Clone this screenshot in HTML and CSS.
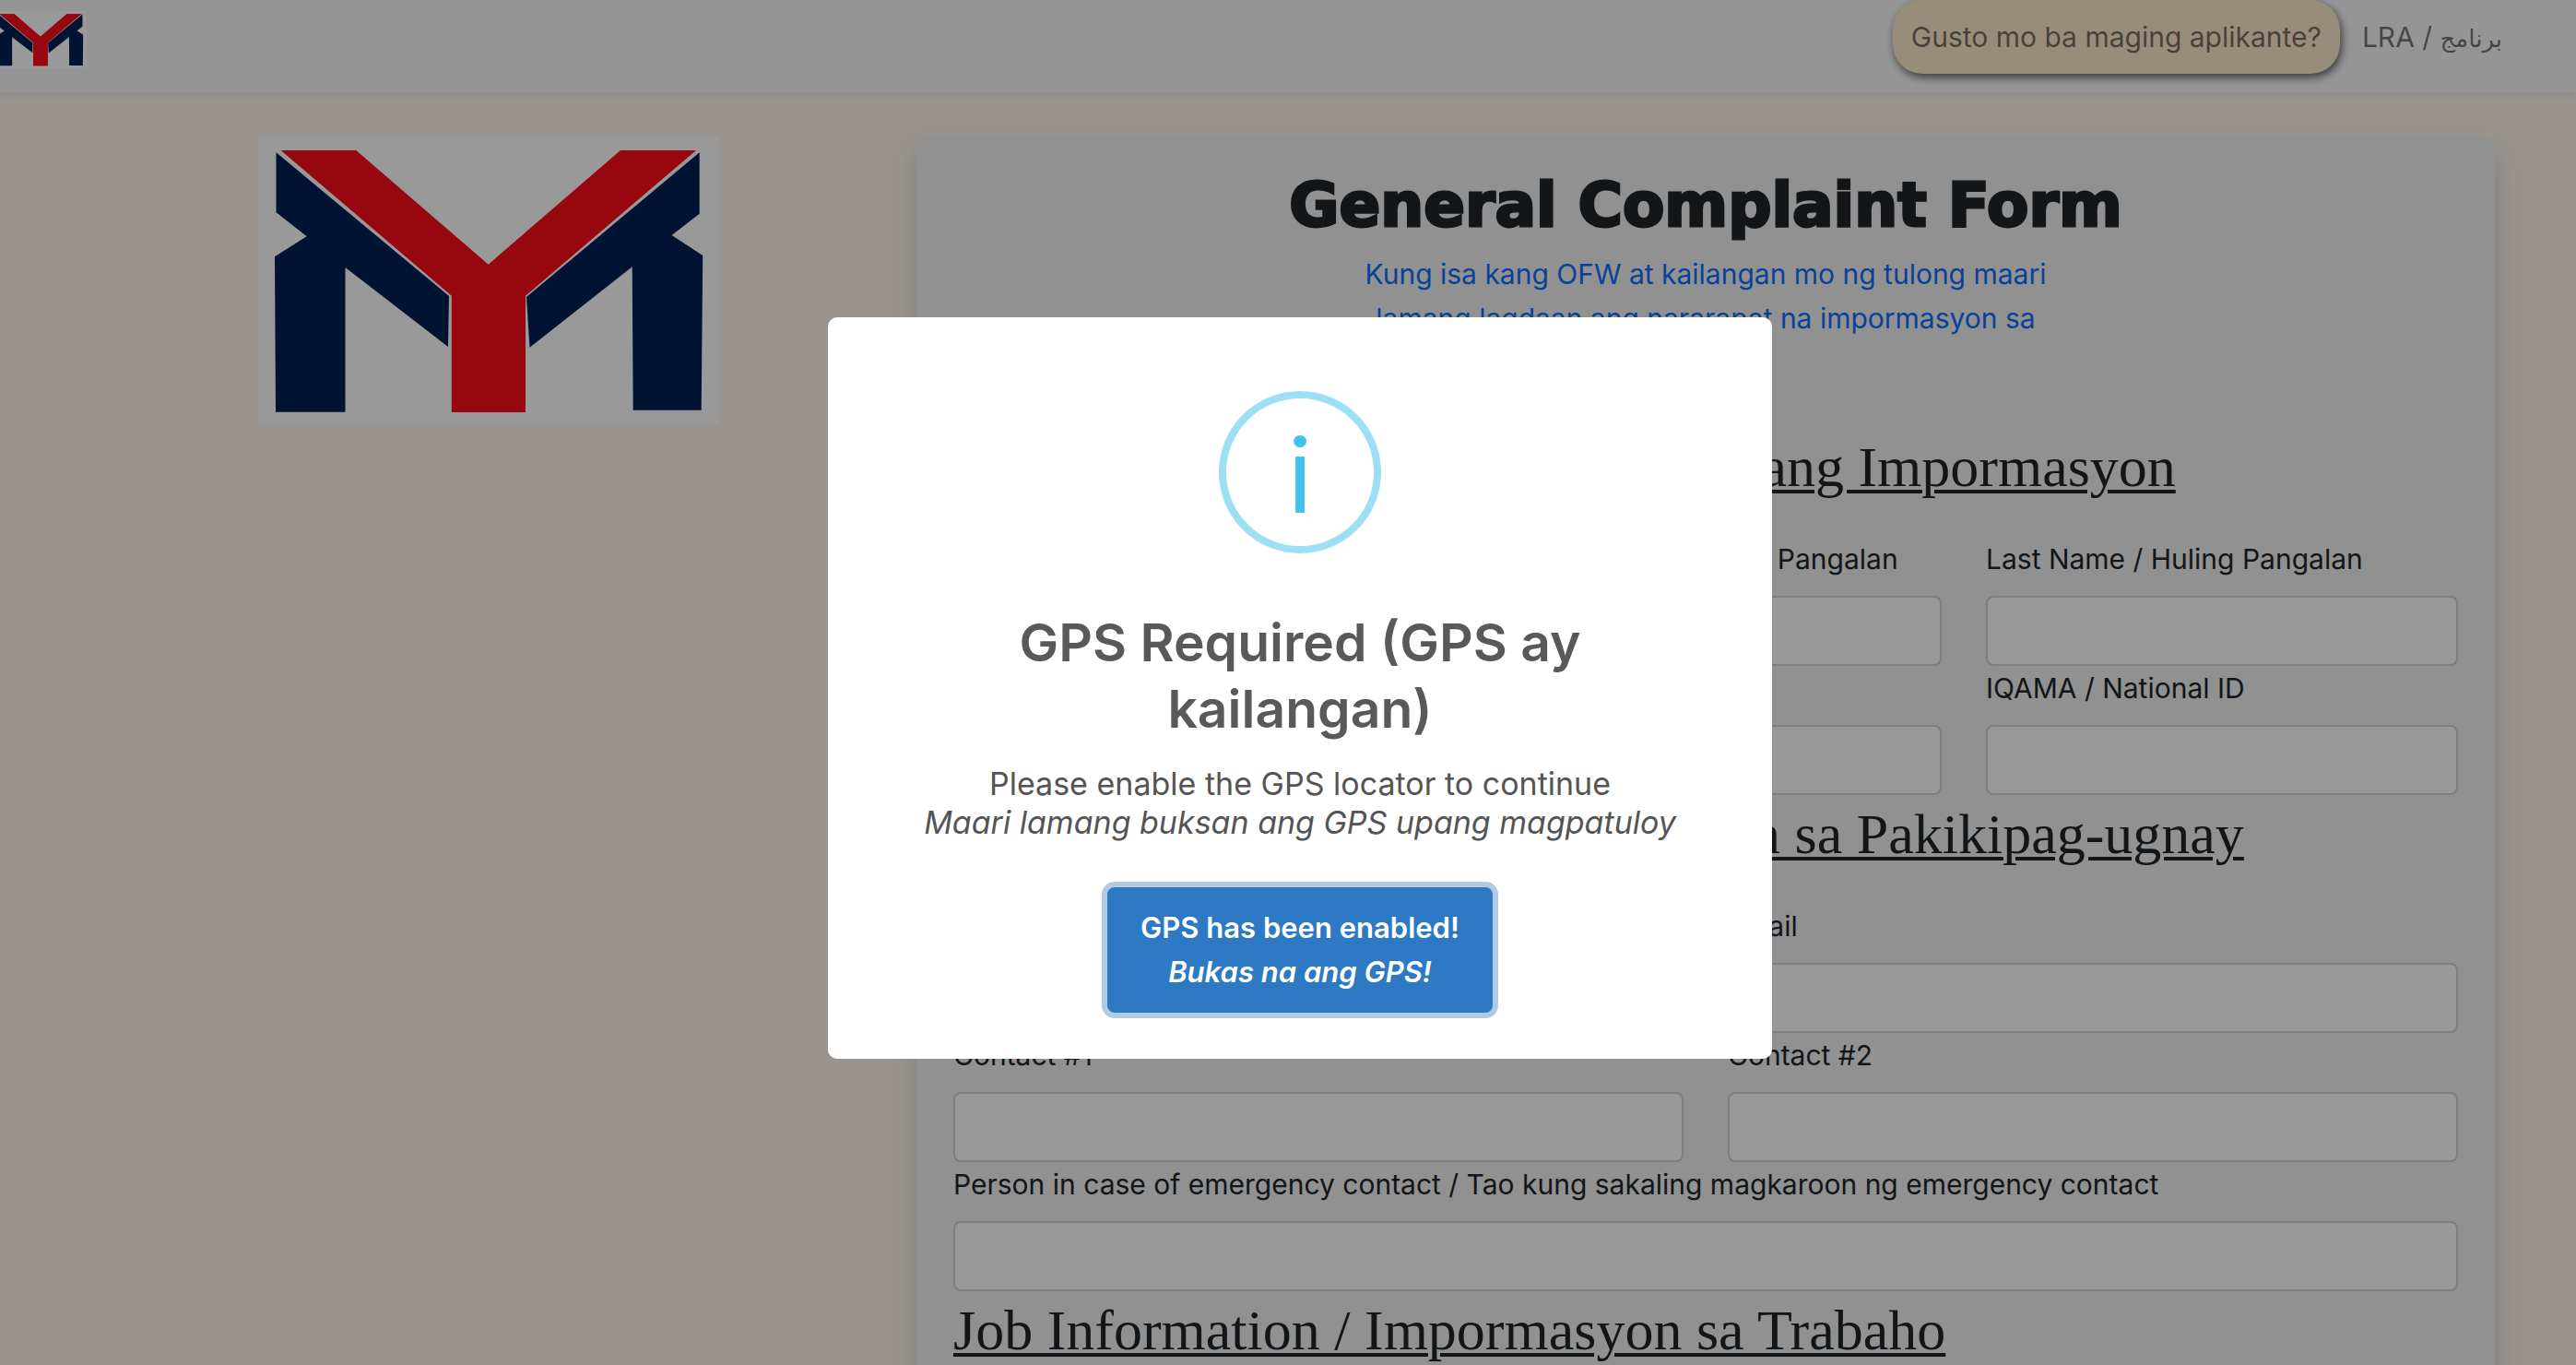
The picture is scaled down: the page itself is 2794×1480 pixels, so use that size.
FILE: index.html
```html
<!DOCTYPE html>
<html lang="tl">
<head>
<meta charset="utf-8">
<meta name="viewport" content="width=device-width, initial-scale=1">
<title>General Complaint Form</title>
<link rel="stylesheet" href="styles.css">
</head>
<body>
<svg class="sprite" aria-hidden="true">
  <symbol id="logo" viewBox="0 0 500 312">
    <rect width="500" height="312" fill="#fff"/>
    <path fill="#002155" d="M19.5 17.3 207 173 206 228 94.5 142V298.7H19L18 130.3 52.7 108.3 19.5 82.3ZM478.7 17.3V83.7L448.6 107 482.2 129 480.7 296.7H406.7L405.7 141.3 294.5 228.7 291 174Z"/>
    <path fill="#fb0d19" d="M24.6 15H106.2L249.6 138.7 393 15H475L290 172.7V299H209.8V172.7Z"/>
  </symbol>
</svg>

<nav class="navbar">
  <a class="brand" href="#" aria-label="Home"><svg class="brand-logo"><use href="#logo"/></svg></a>
  <div class="nav-links">
    <a class="nav-link nav-pill" href="#">Gusto mo ba maging aplikante?</a>
    <a class="nav-link" href="#">LRA / <span class="arabic" lang="ar">برنامج</span></a>
  </div>
</nav>

<main class="layout">
  <div class="side"><svg class="side-logo"><use href="#logo"/></svg></div>
  <form class="card">
    <h1 class="title">General Complaint Form</h1>
    <p class="intro">Kung isa kang OFW at kailangan mo ng tulong maari<br>lamang lagdaan ang nararapat na impormasyon sa<br>ibaba</p>

    <h3 class="section">Personal Information / Pangkalahatang Impormasyon</h3>
    <div class="row thirds">
      <div class="field"><label for="first">First Name / Pangalan</label><input id="first" type="text"></div>
      <div class="field"><label for="middle">Middle Name / Gitnang Pangalan</label><input id="middle" type="text"></div>
      <div class="field"><label for="last">Last Name / Huling Pangalan</label><input id="last" type="text"></div>
      <div class="field"><label for="birth">Birthdate</label><input id="birth" type="text"></div>
      <div class="field"><label for="passport">Passport</label><input id="passport" type="text"></div>
      <div class="field"><label for="iqama">IQAMA / National ID</label><input id="iqama" type="text"></div>
    </div>

    <h3 class="section">Contact Information / Impormasyon sa Pakikipag-ugnay</h3>
    <div class="row halves">
      <div class="field"><label for="address">Address</label><input id="address" type="text"></div>
      <div class="field"><label for="email">Email</label><input id="email" type="email"></div>
      <div class="field"><label for="contact1">Contact #1</label><input id="contact1" type="tel"></div>
      <div class="field"><label for="contact2">Contact #2</label><input id="contact2" type="tel"></div>
    </div>
    <div class="field"><label for="emergency">Person in case of emergency contact / Tao kung sakaling magkaroon ng emergency contact</label><input id="emergency" type="text"></div>

    <h3 class="section">Job Information / Impormasyon sa Trabaho</h3>
  </form>
</main>

<div class="backdrop">
  <div class="modal" role="dialog" aria-modal="true" aria-labelledby="modal-title">
    <div class="modal-icon" aria-hidden="true">i</div>
    <h2 class="modal-title" id="modal-title">GPS Required (GPS ay kailangan)</h2>
    <p class="modal-text">Please enable the GPS locator to continue<br><i>Maari lamang buksan ang GPS upang magpatuloy</i></p>
    <button class="confirm" type="button">GPS has been enabled!<br><i>Bukas na ang GPS!</i></button>
  </div>
</div>
</body>
</html>
```
FILE: styles.css
```css
* { box-sizing: border-box; }

body {
  margin: 0;
  height: 100vh;
  overflow: hidden;
  background: #fff7f0;
  color: #212529;
  font-family: Inter, "DejaVu Sans", sans-serif;
  font-size: 30px;
  line-height: 48px;
}

h1, h2, h3, p { margin: 0; }

.sprite { display: none; }

/* Navigation */
.navbar {
  display: flex;
  align-items: flex-start;
  justify-content: space-between;
  height: 100px;
  padding-right: 64px;
  background: #f8f9fa;
  box-shadow: 0 4px 8px rgba(0, 0, 0, .08);
}

.brand { margin: 12px 0 0 -6px; }
.brand-logo { display: block; width: 100px; height: 62px; }

.nav-links { display: flex; gap: 8px; }

.nav-link {
  height: 80px;
  padding: 16px;
  color: rgba(0, 0, 0, .55);
  text-decoration: none;
  white-space: nowrap;
}

.nav-pill {
  padding: 16px 20px;
  border-radius: 32px;
  background: #fde9cd;
  box-shadow: 2px 4px 10px rgba(0, 0, 0, .6);
}

.arabic { font-size: 26px; }

/* Page layout */
.layout {
  display: grid;
  grid-template-columns: 928fr 1712fr;
  padding: 48px 88px 0 66px;
}

.side { display: flex; justify-content: center; align-items: flex-start; }
.side-logo { width: 500px; height: 312px; }

.card {
  padding: 36px 40px;
  border-radius: 12px;
  background: #f2f2f2;
  box-shadow: 0 16px 32px rgba(0, 0, 0, .15);
}

.title {
  margin-bottom: 12px;
  font-family: "DejaVu Sans", Inter, sans-serif;
  font-size: 66px;
  font-weight: 700;
  line-height: 77px;
  text-align: center;
  -webkit-text-stroke: 3px #212529;
}

.intro {
  margin-bottom: 47px;
  color: #0d6efd;
  text-align: center;
}

.section {
  height: 118px;
  padding-top: 6px;
  font-family: "Liberation Serif", serif;
  font-size: 62px;
  font-weight: 400;
  line-height: 72px;
  text-decoration: underline;
  text-decoration-thickness: 4px;
  text-underline-offset: 4px;
}

.row { display: grid; column-gap: 48px; }
.thirds { grid-template-columns: repeat(3, 1fr); }
.halves { grid-template-columns: repeat(2, 1fr); }

.field label { display: block; margin-bottom: 16px; }

.field input {
  display: block;
  width: 100%;
  height: 76px;
  padding: 12px 24px;
  border: 2px solid #ced4da;
  border-radius: 8px;
  background: #fff;
  font: inherit;
}

/* Dialog */
.backdrop {
  position: fixed;
  inset: 0;
  display: flex;
  align-items: center;
  justify-content: center;
  padding: 12px 0 0 26px;
  background: rgba(0, 0, 0, .4);
}

.modal {
  display: flex;
  flex-direction: column;
  align-items: center;
  width: 1024px;
  padding: 80px 40px 50px;
  border-radius: 10px;
  background: #fff;
  color: #545454;
  text-align: center;
}

.modal-icon {
  width: 176px;
  height: 176px;
  border: 8px solid #9de0f6;
  border-radius: 50%;
  color: #3fc3ee;
  font-size: 112px;
  line-height: 166px;
}

.modal-title {
  margin-top: 61px;
  max-width: 760px;
  color: #595959;
  font-size: 57px;
  font-weight: 600;
  line-height: 72px;
}

.modal-text {
  margin: 24px 0 49px;
  font-size: 34px;
  line-height: 42px;
}

.confirm {
  padding: 20px 36px;
  border: 0;
  border-radius: 8px;
  background: #2d79c3;
  box-shadow: 0 0 0 6px #b2cae4;
  color: #fff;
  font: inherit;
  font-size: 31px;
  font-weight: 600;
}
```
